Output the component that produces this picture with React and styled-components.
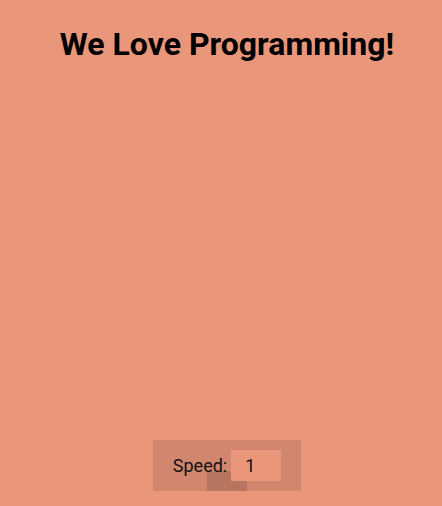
import React from "react";
import styled, { createGlobalStyle } from "styled-components";

const Global = createGlobalStyle`
  html, body { margin: 0; padding: 0; }
  body {
    background: #e9967a;
    font-family: Roboto, "Liberation Sans", sans-serif;
    width: 442px;
    height: 506px;
    overflow: hidden;
  }
`;

const Page = styled.div`
  box-sizing: border-box;
  height: 506px;
  display: flex;
  flex-direction: column;
  align-items: center;
  padding: 8px 0 15px 12px;
`;

const Title = styled.h1`
  margin: 17px 0 0;
  font-size: 32px;
  font-weight: 700;
  color: #000;
`;

const Spacer = styled.div`
  flex: 1;
`;

const Controls = styled.div`
  position: relative;
  display: flex;
  align-items: center;
  gap: 4px;
  padding: 10px 20px;
  background: rgba(0, 0, 0, 0.1);
`;

const Knob = styled.div`
  position: absolute;
  left: 54px;
  bottom: 0;
  width: 40px;
  height: 20px;
  background: rgba(0, 0, 0, 0.12);
`;

const Label = styled.label`
  position: relative;
  font-size: 18px;
  color: #111;
`;

const Input = styled.input`
  position: relative;
  box-sizing: border-box;
  width: 50px;
  height: 31px;
  border: none;
  outline: none;
  background: #e9967a;
  font-family: Roboto, "Liberation Sans", sans-serif;
  font-size: 18px;
  color: #111;
  padding: 0 0 0 14px;
`;

export default function App() {
  return (
    <>
      <Global />
      <Page>
        <Title>We Love Programming!</Title>
        <Spacer />
        <Controls>
          <Knob />
          <Label htmlFor="speed">Speed:</Label>
          <Input id="speed" defaultValue="1" />
        </Controls>
      </Page>
    </>
  );
}
